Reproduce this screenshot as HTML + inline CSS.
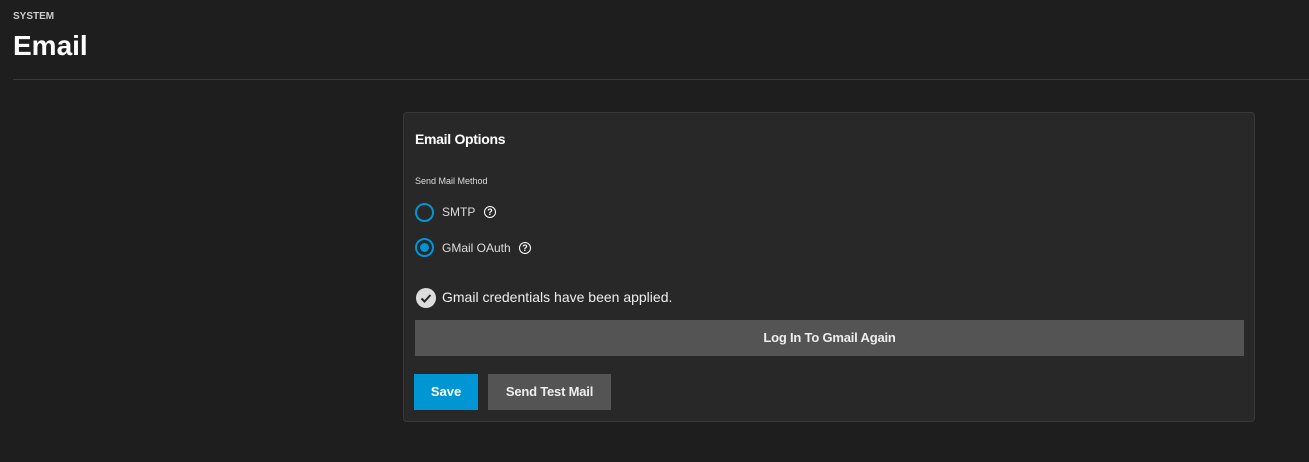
<!DOCTYPE html>
<html><head><style>
body{margin:0;width:1309px;height:462px;background:#1e1e1e;font-family:"Liberation Sans",sans-serif;color:#fff;position:relative;overflow:hidden}
.a{position:absolute}
.card{left:403px;top:112px;width:850px;height:308px;background:#282828;border:1px solid #383838;border-radius:4px}
.radio{width:15px;height:15px;border:2px solid #0095d5;border-radius:50%}
.q{width:10px;height:10px;border:1.5px solid #fff;border-radius:50%;font-size:9px;font-weight:bold;text-align:center;line-height:10px}
</style></head><body>
<div class="a" style="left:13px;top:11px;font-size:10px;font-weight:bold;color:#ccc">SYSTEM</div>
<div class="a" style="left:13px;top:30px;font-size:28px;font-weight:bold">Email</div>
<div class="a" style="left:13px;top:79px;width:1296px;height:1px;background:#3a3a3a"></div>
<div class="a card"></div>
<div class="a" style="left:415px;top:131px;font-size:14px;font-weight:bold;letter-spacing:-0.3px">Email Options</div>
<div class="a" style="left:415px;top:176px;font-size:9px;color:#ddd">Send Mail Method</div>
<div class="a radio" style="left:415px;top:203px"></div>
<div class="a" style="left:442px;top:205px;font-size:12px;color:#ddd">SMTP</div>
<div class="a q" style="left:484px;top:206px">?</div>
<div class="a radio" style="left:415px;top:238px"></div>
<div class="a" style="left:420px;top:243px;width:9px;height:9px;border-radius:50%;background:#0095d5"></div>
<div class="a" style="left:442px;top:241px;font-size:12px;color:#ddd">GMail OAuth</div>
<div class="a q" style="left:519px;top:242px">?</div>
<div class="a" style="left:416px;top:288px;width:20px;height:20px;border-radius:50%;background:#ddd"></div>
<svg class="a" style="left:416px;top:288px" width="20" height="20"><path d="M5.5 10.5l3 3 6-6.5" stroke="#282828" stroke-width="2" fill="none"/></svg>
<div class="a" style="left:442px;top:289px;font-size:14px;color:#eee">Gmail credentials have been applied.</div>
<div class="a" style="left:415px;top:320px;width:829px;height:36px;background:#545454;font-size:13px;font-weight:bold;text-align:center;line-height:36px;color:#eee;letter-spacing:-0.2px">Log In To Gmail Again</div>
<div class="a" style="left:414px;top:374px;width:64px;height:36px;background:#0095d5;font-size:13px;font-weight:bold;text-align:center;line-height:36px">Save</div>
<div class="a" style="left:488px;top:374px;width:123px;height:36px;background:#545454;font-size:13px;font-weight:bold;text-align:center;line-height:36px;color:#eee;letter-spacing:-0.2px">Send Test Mail</div>
</body></html>
